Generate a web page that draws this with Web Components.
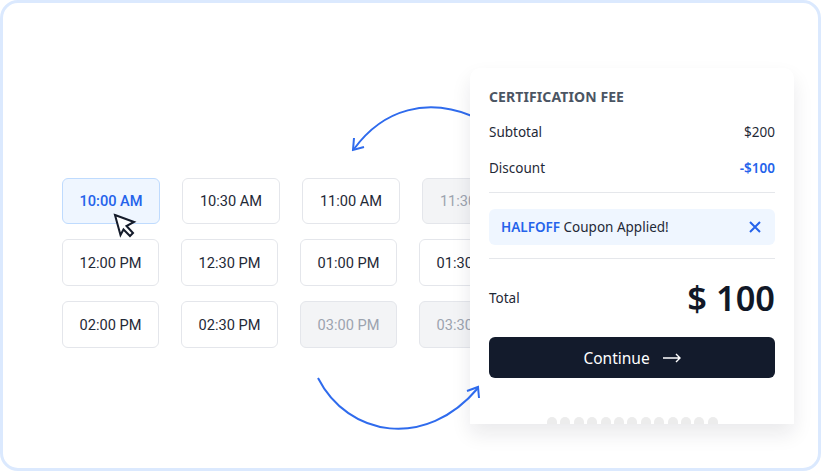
<!DOCTYPE html>
<html>
<head>
<meta charset="utf-8">
<style>
  html, body { margin: 0; padding: 0; background: #fff; }
  body { width: 821px; height: 471px; overflow: hidden; }
</style>
</head>
<body>
<booking-frame>
  <slot-grid slot="slots">
    <div class="row first">
      <time-slot state="active">10:00 AM</time-slot>
      <time-slot>10:30 AM</time-slot>
      <time-slot>11:00 AM</time-slot>
      <time-slot state="off">11:30 AM</time-slot>
    </div>
    <div class="row">
      <time-slot>12:00 PM</time-slot>
      <time-slot>12:30 PM</time-slot>
      <time-slot>01:00 PM</time-slot>
      <time-slot>01:30 PM</time-slot>
    </div>
    <div class="row">
      <time-slot>02:00 PM</time-slot>
      <time-slot>02:30 PM</time-slot>
      <time-slot state="off">03:00 PM</time-slot>
      <time-slot state="off">03:30 PM</time-slot>
    </div>
  </slot-grid>
  <fee-card slot="card"></fee-card>
</booking-frame>

<script>
class BookingFrame extends HTMLElement {
  constructor() {
    super();
    this.attachShadow({ mode: "open" });
  }

  connectedCallback() {
    this.shadowRoot.innerHTML = `
  <style>
    :host {
      display: block;
      position: relative;
      width: 821px;
      height: 471px;
      box-sizing: border-box;
      border: 3px solid #dbe9fe;
      border-radius: 18px;
      background: #fff;
      overflow: hidden;
    }

    .slots {
      padding: 175px 0 0 59px;
    }

    .arrows {
      position: absolute;
      left: -3px;
      top: -3px;
    }

    .cursor {
      position: absolute;
      left: 108px;
      top: 208px;
    }

    .card {
      position: absolute;
      left: 467px;
      top: 65px;
    }
  </style>

      <div class="slots"><slot name="slots"></slot></div>
      <svg class="arrows" width="821" height="471" fill="none" stroke="#2f6bed" stroke-width="2">
        <path d="M472 116C428 98 384 108 354 149" />
        <path d="M354 138L353 150L364 147" />
      </svg>
      <svg class="cursor" width="26" height="28" viewBox="0 0 26 28" fill="#fff" stroke="#151c2b" stroke-width="2">
        <path d="M4 4L23 11L15.5 15L22 22L19 25L12.5 18.5L9.5 24Z" />
      </svg>
      <div class="card"><slot name="card"></slot></div>
      <svg class="arrows" width="821" height="471" fill="none" stroke="#2f6bed" stroke-width="2">
        <path d="M318 378C348 437 426 450 478 388" />
        <path d="M467 391L478 387L479 398" />
      </svg>
    `;
  }
}

class SlotGrid extends HTMLElement {
  constructor() {
    super();
    this.attachShadow({ mode: "open" });
  }

  connectedCallback() {
    this.shadowRoot.innerHTML = `
  <style>
    :host {
      display: flex;
      flex-direction: column;
      gap: 15px;
    }

    ::slotted(.row) {
      display: flex;
      gap: 22px;
    }
  </style>
      <slot></slot>
    `;
  }
}

class TimeSlot extends HTMLElement {
  constructor() {
    super();
    this.attachShadow({ mode: "open" });
  }

  connectedCallback() {
    this.shadowRoot.innerHTML = `
  <style>
    :host {
      display: flex;
      align-items: center;
      justify-content: center;
      box-sizing: border-box;
      width: 97px;
      height: 47px;
      flex: none;
      border: 1px solid #e4e6eb;
      border-radius: 6px;
      background: #fff;
      color: #1f2937;
      font: 14.6px Roboto, sans-serif;
    }

    :host(.wide) {
      width: 98px;
      height: 46px;
    }

    :host([state="active"]) {
      border-color: #bfdbfe;
      background: #eff6ff;
      color: #2563eb;
      font-weight: 500;
    }

    :host([state="off"]) {
      background: #f3f4f6;
      color: #9ca3af;
    }
  </style>
      <slot></slot>
    `;
    if (this.parentElement.classList.contains("first")) this.classList.add("wide");
  }
}

class FeeCard extends HTMLElement {
  constructor() {
    super();
    this.attachShadow({ mode: "open" });
  }

  connectedCallback() {
    const bumps = Array.from({ length: 13 }, () => "<i></i>").join("");
    this.shadowRoot.innerHTML = `
  <style>
    :host {
      display: block;
      position: relative;
      box-sizing: border-box;
      width: 324px;
      height: 356px;
      padding: 19px 19px 0;
      border-radius: 10px 10px 0 0;
      background: #fff;
      color: #1f2937;
      font: 13.5px "Noto Sans", sans-serif;
      box-shadow: 0 10px 20px rgba(17, 24, 39, 0.09);
    }

    h2 {
      margin: 0 0 17px;
      font-size: 14px;
      line-height: 19px;
      font-weight: 700;
      color: #4b5563;
      letter-spacing: 0.1px;
    }

    .line {
      display: flex;
      justify-content: space-between;
      line-height: 19px;
    }

    .line + .line {
      margin-top: 17px;
    }

    .blue {
      color: #2563eb;
      font-weight: 600;
    }

    hr {
      margin: 14px 0 16px;
      border: 0;
      border-top: 1px solid #e5e7eb;
    }

    .coupon {
      display: flex;
      align-items: center;
      justify-content: space-between;
      height: 36px;
      padding: 0 14px 0 12px;
      border-radius: 6px;
      background: #eff6ff;
    }

    hr.low {
      margin: 13px 0 15px;
    }

    .total {
      display: flex;
      align-items: center;
      justify-content: space-between;
      height: 48px;
    }

    .total b {
      font-size: 34.4px;
      line-height: 44px;
      font-weight: 600;
      color: #111827;
    }

    button {
      display: flex;
      align-items: center;
      justify-content: center;
      gap: 13px;
      width: 100%;
      height: 41px;
      margin-top: 15px;
      border: 0;
      border-radius: 6px;
      background: #131b2c;
      color: #fff;
      font: 15.5px "Noto Sans", sans-serif;
    }

    .bumps {
      position: absolute;
      left: 77px;
      bottom: 0;
      display: flex;
      gap: 3.4px;
    }

    .bumps i {
      width: 10px;
      height: 7px;
      border-radius: 5px 5px 0 0;
      background: #ececec;
    }
  </style>

      <h2>CERTIFICATION FEE</h2>
      <div class="line"><span>Subtotal</span><span>$200</span></div>
      <div class="line"><span>Discount</span><span class="blue">-$100</span></div>
      <hr>
      <div class="coupon">
        <span><span class="blue">HALFOFF</span> Coupon Applied!</span>
        <svg width="12" height="12" viewBox="0 0 12 12" stroke="#2563eb" stroke-width="2" fill="none">
          <path d="M1 1L11 11M11 1L1 11" />
        </svg>
      </div>
      <hr class="low">
      <div class="total"><span>Total</span><b>$ 100</b></div>
      <button>Continue
        <svg width="18" height="10" viewBox="0 0 18 10" stroke="#fff" stroke-width="1.4" fill="none">
          <path d="M0 5H17M13 1L17 5L13 9" />
        </svg>
      </button>
      <div class="bumps">${bumps}</div>
    `;
  }
}

customElements.define("booking-frame", BookingFrame);
customElements.define("slot-grid", SlotGrid);
customElements.define("time-slot", TimeSlot);
customElements.define("fee-card", FeeCard);
</script>
</body>
</html>
